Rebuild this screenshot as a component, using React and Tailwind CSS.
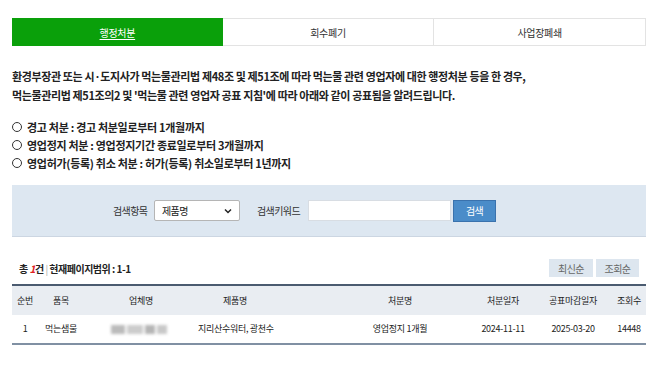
import React, { useState } from 'react';

const font = { fontFamily: '"Noto Sans CJK KR", "Noto Sans", sans-serif' };

const tabs = ['행정처분', '회수폐기', '사업장폐쇄'];

const rules = [
    '경고 처분 : 경고 처분일로부터 1개월까지',
    '영업정지 처분 : 영업정지기간 종료일로부터 3개월까지',
    '영업허가(등록) 취소 처분 : 허가(등록) 취소일로부터 1년까지',
];

const App = () => {
    const [active] = useState(0);

    return (
        <div className="w-[658px] h-[370px] bg-white text-[#222] overflow-hidden" style={font}>
            <div className="px-3 pt-[18px]">
                {/* tabs */}
                <div className="flex h-[28px] text-[10px] tracking-[-0.3px]">
                    {tabs.map((t, i) => (
                        <div
                            key={t}
                            className={
                                i === active
                                    ? 'flex-1 flex items-center justify-center bg-[#0aa00a] text-white underline underline-offset-2'
                                    : 'flex-1 flex items-center justify-center bg-white border border-[#e3e3e3] border-l-0 text-[#333]'
                            }
                        >
                            {t}
                        </div>
                    ))}
                </div>

                {/* intro */}
                <div className="mt-[21px] text-[11px] font-bold leading-[19px] tracking-[-0.38px] text-[#222]">
                    <p>환경부장관 또는 시·도지사가 먹는물관리법 제48조 및 제51조에 따라 먹는물 관련 영업자에 대한 행정처분 등을 한 경우,</p>
                    <p>먹는물관리법 제51조의2 및 '먹는물 관련 영업자 공표 지침'에 따라 아래와 같이 공표됨을 알려드립니다.</p>
                </div>

                <ul className="mt-[13px] text-[11px] font-bold leading-[18px] tracking-[-0.3px]">
                    {rules.map(r => (
                        <li key={r} className="flex items-center gap-[5px]">
                            <span className="w-[10px] h-[10px] rounded-full border border-[#333] inline-block"></span>
                            <span>{r}</span>
                        </li>
                    ))}
                </ul>

                {/* search box */}
                <div className="mt-[13px] h-[52px] bg-[#dde7f1] border-b border-[#ccd6e2] flex items-center text-[10px] tracking-[-0.6px]">
                    <span className="ml-[101px] w-[41px] text-[#333]">검색항목</span>
                    <div className="w-[86px] h-[21px] bg-white border border-[#b5b5b5] rounded-[2px] flex items-center justify-between px-[7px]">
                        <span className="text-[10px]">제품명</span>
                        <svg width="8" height="6" viewBox="0 0 8 6"><path d="M1 1.5 L4 4.5 L7 1.5" fill="none" stroke="#222" strokeWidth="1.5" /></svg>
                    </div>
                    <span className="ml-[17px] w-[51px] text-[#333]">검색키워드</span>
                    <div className="w-[143px] h-[21px] bg-white border border-[#d8dde3]"></div>
                    <button className="ml-[2px] w-[43px] h-[22px] bg-[#4a8cc9] border border-[#3a72ad] text-white text-[10px]">검색</button>
                </div>

                {/* count + sort */}
                <div className="mt-[22px] flex items-center justify-between h-[18px] text-[10px] tracking-[-0.5px]">
                    <div className="ml-[7px] font-semibold">
                        총 <span className="text-[#e02020] italic font-bold">1</span>건 <span className="text-[#aaa] font-normal">|</span> 현재페이지범위 : 1-1
                    </div>
                    <div className="flex gap-[3px] mr-[7px]">
                        <div className="w-[44px] h-[18px] bg-[#dde6ef] text-[#666] flex items-center justify-center">최신순</div>
                        <div className="w-[43px] h-[18px] bg-[#dde6ef] text-[#666] flex items-center justify-center">조회순</div>
                    </div>
                </div>

                {/* table */}
                <table className="mt-[7px] w-full table-fixed text-[9px] tracking-[-0.3px] border-collapse whitespace-nowrap">
                    <thead>
                        <tr className="bg-[#e9edf2] border-t-2 border-[#4b5b70] h-[30px]">
                            <th className="font-normal w-[26px]">순번</th>
                            <th className="font-normal w-[46px]">품목</th>
                            <th className="font-normal w-[114px]">업체명</th>
                            <th className="font-normal w-[74px]">제품명</th>
                            <th className="font-normal w-[200px]"><div className="pl-[56px]">처분명</div></th>
                            <th className="font-normal w-[62px]">처분일자</th>
                            <th className="font-normal w-[78px]">공표마감일자</th>
                            <th className="font-normal w-[34px]">조회수</th>
                        </tr>
                    </thead>
                    <tbody>
                        <tr className="h-[29px] border-b-2 border-[#8090a3] text-center">
                            <td>1</td>
                            <td>먹는샘물</td>
                            <td>
                                <div className="flex justify-center gap-[2px] blur-[1.5px] mr-[4px]">
                                    <span className="w-[14px] h-[9px] bg-[#bbb]"></span>
                                    <span className="w-[16px] h-[9px] bg-[#ccc]"></span>
                                    <span className="w-[10px] h-[9px] bg-[#b5b5b5]"></span>
                                    <span className="w-[10px] h-[9px] bg-[#c8c8c8]"></span>
                                </div>
                            </td>
                            <td>지리산수워터, 광천수</td>
                            <td><div className="pl-[56px]">영업정지 1개월</div></td>
                            <td>2024-11-11</td>
                            <td>2025-03-20</td>
                            <td>14448</td>
                        </tr>
                    </tbody>
                </table>
            </div>
        </div>
    );
};

export default App;
